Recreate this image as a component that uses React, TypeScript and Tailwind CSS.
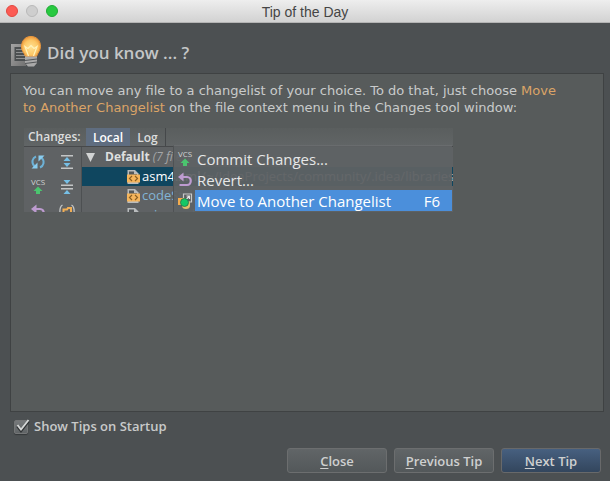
import React, { useState } from "react";

const lucida = "font-['Open_Sans','Noto_Sans',sans-serif]";

function BulbIcon() {
  return (
    <svg width="30" height="31" viewBox="0 0 30 31" aria-hidden="true">
      <defs>
        <linearGradient id="page" x1="0" x2="1" y1="0" y2="1">
          <stop offset="0" stopColor="#a4a4a4" />
          <stop offset="1" stopColor="#707070" />
        </linearGradient>
        <radialGradient id="glow" cx="0.5" cy="0.55" r="0.55">
          <stop offset="0" stopColor="#ffe193" />
          <stop offset="0.65" stopColor="#fcc766" />
          <stop offset="1" stopColor="#ee9a3c" />
        </radialGradient>
      </defs>
      <path d="M0 8h15v22H0z" fill="url(#page)" />
      <path d="M3.500 11H15v14H3.500z" fill="#4b4f51" />
      <path d="M5 13.500h8M5 16.500h9M5 19.500h9M5 22.500h9" stroke="#8e9091" />
      <path d="M10.500 11C10.500 4.500 14.500 0.500 20 0.500S29.500 4.500 29.500 10.500c0 4-3 6.500-4 10H14.500c-1-3.500-4-5.500-4-9.500z" fill="url(#glow)" stroke="#e9973e" />
      <path d="M17.500 20L14 10.500l3 2 3-3 3 3 3-2L22.500 20" fill="none" stroke="#fff3bd" strokeWidth="1.200" />
      <path d="M14 20.500h12V27l-3 3.500h-6L14 27z" fill="#a9a9a9" />
      <path d="M14 24.500l12-1.500M14 27.500l12-1.500" stroke="#545759" strokeWidth="1.200" />
    </svg>
  );
}

function RefreshIcon() {
  return (
    <svg width="16" height="16" viewBox="0 0 16 16" fill="none" aria-hidden="true">
      <path d="M6 2.500C2.500 4 .8 8.500 4.500 12.500M10 13.500c3.500-1.500 5.200-6 1.500-10" stroke="#6db1d6" strokeWidth="2" />
      <path d="M1.500 14.500h6v-6zM14.500 1.500h-6v6z" fill="#8acdf0" />
    </svg>
  );
}

function ExpandIcon() {
  return (
    <svg width="14" height="16" viewBox="0 0 14 16" aria-hidden="true">
      <path d="M1 1h12v1.500H1zM1 13.500h12V15H1z" fill="#c3c5c6" />
      <path d="M7 3l3.500 4h-7zM7 13l3.500-4h-7z" fill="#76bfe6" />
    </svg>
  );
}

function CollapseIcon() {
  return (
    <svg width="14" height="16" viewBox="0 0 14 16" aria-hidden="true">
      <path d="M1 5.500h12V7H1zM1 9h12v1.500H1z" fill="#c3c5c6" />
      <path d="M7 5L3.500 1h7zM7 11l-3.500 4h7z" fill="#76bfe6" />
    </svg>
  );
}

function VcsIcon() {
  return (
    <svg width="16" height="17" viewBox="0 0 16 17" aria-hidden="true">
      <text x="8" y="7" textAnchor="middle" fontSize="8" fill="#d0d2d3" className={lucida}>
        VCS
      </text>
      <path d="M8 8.500l4.500 4.500H10v3H6v-3H3.500z" fill="#4bc46f" />
    </svg>
  );
}

function UndoIcon() {
  return (
    <svg width="16" height="16" viewBox="0 0 16 16" aria-hidden="true">
      <path d="M5 5h5c5 0 5 8 0 8H2.500" fill="none" stroke="#bd9bd0" strokeWidth="2.200" />
      <path d="M1 5l5.500-4.500v9z" fill="#bd9bd0" />
    </svg>
  );
}

function GroupIcon() {
  return (
    <svg width="16" height="16" viewBox="0 0 16 16" aria-hidden="true">
      <path d="M3.500 1C0 3 0 12 3.500 14M12.500 1c3.500 2 3.500 11 0 13" fill="none" stroke="#c3c5c6" strokeWidth="1.300" />
      <path d="M4.500 12V5.500H8L9 4h3v8" fill="none" stroke="#f0ae55" strokeWidth="2" />
    </svg>
  );
}

function FileIcon() {
  return (
    <svg width="14" height="16" viewBox="0 0 14 16" className="shrink-0" aria-hidden="true">
      <path d="M1.500 1H9l3.500 3.500V15h-11z" fill="#b9bcbd" />
      <path d="M3 2.500h5v2.500h3V6H3z" fill="#54585a" />
      <path d="M1 5.500h13v8H1z" fill="#f5b55c" />
      <path d="M6 7L3.500 9.500 6 12M9 7l2.500 2.500L9 12" fill="none" stroke="#8a5f23" strokeWidth="1.200" />
    </svg>
  );
}

function MoveIcon() {
  return (
    <svg width="16" height="16" viewBox="0 0 16 16" aria-hidden="true">
      <path d="M6.500 1h8v8h-8z" fill="#5c5f61" stroke="#c8caca" strokeWidth="1.200" />
      <path d="M8.500 7l4-4M9.500 3h3v3" fill="none" stroke="#e3e4e4" strokeWidth="1.200" />
      <path d="M1 5h7v7H1z" fill="#f3ab4e" />
      <path d="M5 8.500h8v4q0 3.500-4 3.500t-4-3.500z" fill="#dfc06a" />
      <circle cx="7.500" cy="9.500" r="4" fill="#13c866" stroke="#2c6b48" strokeWidth=".8" />
    </svg>
  );
}

function TreeRow({ name, path, selected }: { name: string; path?: string; selected?: boolean }) {
  return (
    <div
      className={`flex h-[19px] shrink-0 items-center gap-0.5 pl-11 font-medium whitespace-nowrap ${
        selected ? "bg-[#0f465f] text-white" : "text-[#82b4d5]"
      }`}
    >
      <FileIcon />
      <span>{name}</span>
      {path && <span className="ml-auto font-normal text-[#b4b8ba]">{path}</span>}
    </div>
  );
}

function MenuItem({
  icon,
  label,
  hotkey,
  active,
}: {
  icon: React.ReactNode;
  label: string;
  hotkey?: string;
  active?: boolean;
}) {
  return (
    <button type="button" role="menuitem" className="flex h-[21px] w-full items-stretch text-left">
      <span className="flex w-[21px] items-center justify-center">{icon}</span>
      <span
        className={`flex flex-1 items-center justify-between pr-3 pl-0.5 ${
          active ? "bg-[#4b8fdb] text-white" : "text-[#e6e7e7]"
        }`}
      >
        {label}
        {hotkey && <span>{hotkey}</span>}
      </span>
    </button>
  );
}

function ChangesPreview() {
  return (
    <div className={`relative mt-3 ml-px flex h-[84px] w-[429px] flex-col overflow-hidden bg-[#5f6264] ${lucida}`}>
      <div className="flex h-[19px] shrink-0 items-stretch border-b border-[#47494b] bg-linear-to-b from-[#5a5e5e] to-[#616566] text-[12px] leading-[17px] font-semibold text-[#dcdddd]">
        <span className="w-[62px] pl-1">Changes:</span>
        <button type="button" className="w-11 bg-[#5f6d80] text-white">
          Local
        </button>
        <button type="button" className="w-9 border-r border-[#45484a]">
          Log
        </button>
      </div>
      <div className="flex flex-1">
        <div className="grid w-[58px] shrink-0 auto-rows-[25px] grid-cols-2 place-items-center border-r border-[#4d5052] pt-0.5">
          <RefreshIcon />
          <ExpandIcon />
          <VcsIcon />
          <CollapseIcon />
          <UndoIcon />
          <GroupIcon />
        </div>
        <div className="flex flex-1 flex-col text-[13px]">
          <div className="flex h-5 shrink-0 items-center gap-2.5 pl-1 text-[#dedfdf]">
            <svg width="9" height="9" viewBox="0 0 9 9" aria-hidden="true">
              <path d="M0 0h9L4.500 9z" fill="#d2d4d4" />
            </svg>
            <span className="text-[12px] font-bold">
              Default <i className="font-normal text-[#a5a7a8]">(7 files)</i>
            </span>
          </div>
          <TreeRow name="asm4.xml" path="(~/IdeaProjects/community/.idea/libraries)" selected />
          <TreeRow name="codeStyle.xml" />
          <TreeRow name="misc.xml" />
        </div>
      </div>
      <div
        role="menu"
        className="absolute top-[17px] right-px bottom-0 w-[279px] border-t border-l border-[#4f5254] border-t-[#696c6e] bg-[#5f6264]/94 pt-0.5 text-[15px] leading-5 font-medium"
      >
        <MenuItem icon={<VcsIcon />} label="Commit Changes..." />
        <MenuItem icon={<UndoIcon />} label="Revert..." />
        <MenuItem icon={<MoveIcon />} label="Move to Another Changelist" hotkey="F6" active />
      </div>
    </div>
  );
}

function DialogButton({ hot, rest, primary }: { hot: string; rest: string; primary?: boolean }) {
  return (
    <button
      type="button"
      className={`h-[25px] w-[100px] rounded-[3px] border bg-linear-to-b text-[13px] leading-5 font-semibold text-[#cfd0d0] ${
        primary ? "border-[#68696a] from-[#476080] to-[#33465d]" : "border-[#6c6e6f] from-[#616567] to-[#53585a]"
      }`}
    >
      <span className="underline underline-offset-2">{hot}</span>
      {rest}
    </button>
  );
}

export default function App() {
  const [showTips, setShowTips] = useState(true);
  return (
    <div className={`flex min-h-screen flex-col bg-[#4c5052] ${lucida}`}>
      <header className="relative flex h-[23px] items-center justify-center border-b border-[#b4b4b4] bg-linear-to-b from-[#eeeeee] to-[#d2d2d2]">
        <div className="absolute left-1.5 flex gap-2">
          <button type="button" aria-label="Close window" className="size-3 rounded-full border border-[#e24840] bg-[#fc5b54]" />
          <button type="button" aria-label="Minimize window" className="size-3 rounded-full border border-[#b9b9b9] bg-[#cecece]" />
          <button type="button" aria-label="Zoom window" className="size-3 rounded-full border border-[#1faa34] bg-[#28c940]" />
        </div>
        <h1 className="pt-0.5 font-['Liberation_Sans',sans-serif] text-[14px] leading-5 text-[#454545]">Tip of the Day</h1>
      </header>

      <main className="flex flex-1 flex-col pr-1.5 pb-2 pl-2.5">
        <div className="flex h-[50px] items-end gap-1.5 pb-1.5 pl-px">
          <BulbIcon />
          <h2 className="text-[17px] leading-7 font-semibold text-[#c4c6c7]">Did you know ... ?</h2>
        </div>

        <section className="flex-1 border border-[#3f4243] bg-[#575b5b] px-3 pt-2">
          <p className="pr-6 font-['DejaVu_Sans',sans-serif] text-[13px] leading-[17px] text-[#c9cbcb]">
            You can move any file to a changelist of your choice. To do that, just choose{" "}
            <span className="text-[#dba467]">Move to Another Changelist</span> on the file context menu in the Changes
            tool window:
          </p>
          <ChangesPreview />
        </section>

        <label className="mt-[5px] flex h-5 items-center gap-1.5 self-start pl-1 text-[13px] font-semibold text-[#c8caca]">
          <span className="relative size-[14px]">
            <input
              type="checkbox"
              checked={showTips}
              onChange={(e) => setShowTips(e.target.checked)}
              className="block size-[14px] appearance-none rounded-[2px] border border-[#747677] bg-linear-to-b from-[#76797b] to-[#606466] shadow-[0_1px_1px_#35383a]"
            />
            {showTips && (
              <svg width="16" height="16" viewBox="0 0 16 16" className="pointer-events-none absolute -top-0.5 left-0" aria-hidden="true">
                <path d="M3.500 8l3.500 4.500L14.500 3" fill="none" stroke="#303335" strokeWidth="3" />
                <path d="M3.500 7l3.500 4.500L14.500 2" fill="none" stroke="#d5d7d7" strokeWidth="2" />
              </svg>
            )}
          </span>
          Show Tips on Startup
        </label>

        <div className="mt-[11px] flex justify-end gap-[7px] pr-[3px]">
          <DialogButton hot="C" rest="lose" />
          <DialogButton hot="P" rest="revious Tip" />
          <DialogButton hot="N" rest="ext Tip" primary />
        </div>
      </main>
    </div>
  );
}
